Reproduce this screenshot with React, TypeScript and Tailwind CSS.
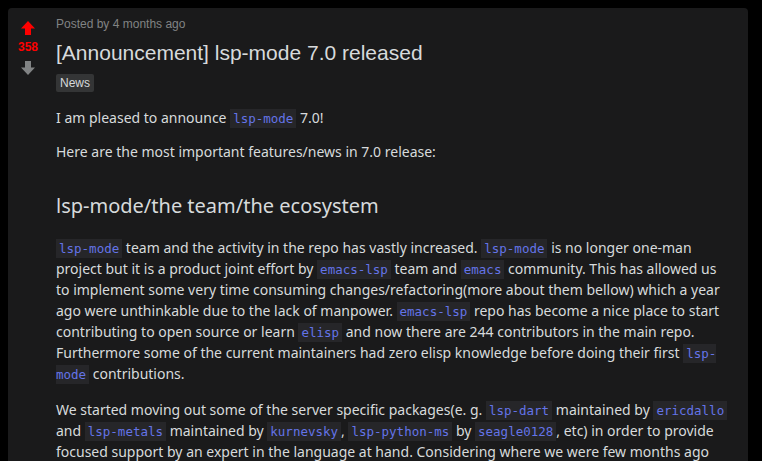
import React from 'react';

const Code = ({ children }: { children: React.ReactNode }) => (
  <code className="bg-[#262629] text-[#6474e8] px-[3px] py-[2px] text-[12.5px] leading-[15px] font-['DejaVu_Sans_Mono',monospace]">
    {children}
  </code>
);

const Arrow = ({ up, color }: { up: boolean; color: string }) => (
  <svg width="16" height="16" viewBox="0 0 16 16" className={up ? '' : 'rotate-180'}>
    <path d="M8 1 L15 8.5 L11 8.5 L11 15 L5 15 L5 8.5 L1 8.5 Z" fill={color} />
  </svg>
);

const App = () => {
  return (
    <div className="min-h-screen bg-black pt-2 pl-2 pr-[14px]">
      <div className="flex bg-[#1a1a1b] rounded-t min-h-[460px]">
        {/* Votes */}
        <div className="w-10 flex flex-col items-center pt-[12px] shrink-0">
          <Arrow up color="#ff0000" />
          <span className="text-[12px] font-bold text-[#ff0000] leading-[16px] mt-[3px] font-['Liberation_Sans',sans-serif]">
            358
          </span>
          <div className="mt-[5px]">
            <Arrow up={false} color="#818384" />
          </div>
        </div>

        {/* Post */}
        <div className="flex-1 pl-2 pr-[18px] pt-[8px] font-['Noto_Sans',sans-serif]">
          <div className="text-[12px] text-[#818384] leading-[16px] font-['Liberation_Sans',sans-serif]">
            Posted by 4 months ago
          </div>
          <h1 className="mt-[8px] text-[21px] leading-[26px] font-medium text-[#d7dadc] font-['Liberation_Sans',sans-serif]">
            [Announcement] lsp-mode 7.0 released
          </h1>
          <span className="inline-block mt-[8px] bg-[#343536] text-[#d7dadc] text-[12px] font-medium leading-[16px] px-[4px] py-[1px] rounded-[2px] font-['Liberation_Sans',sans-serif]">
            News
          </span>

          <div className="mt-[14px] text-[14px] leading-[21px] text-[#d7dadc]">
            <p>
              I am pleased to announce <Code>lsp-mode</Code> 7.0!
            </p>
            <p className="mt-[13px]">Here are the most important features/news in 7.0 release:</p>
            <h2 className="mt-[30px] text-[20px] leading-[28px] font-normal">lsp-mode/the team/the ecosystem</h2>
            <p className="mt-[17px]">
              {' '}<Code>lsp-mode</Code> team and the activity in the repo has vastly increased. <Code>lsp-mode</Code>{' '}
              is no longer one-man project but it is a product joint effort by <Code>emacs-lsp</Code> team and{' '}
              <Code>emacs</Code> community. This has allowed us to implement some very time consuming
              changes/refactoring(more about them bellow) which a year ago were unthinkable due to the lack of
              manpower. <Code>emacs-lsp</Code> repo has become a nice place to start contributing to open source or
              learn <Code>elisp</Code> and now there are 244 contributors in the main repo. Furthermore some of the
              current maintainers had zero elisp knowledge before doing their first <Code>lsp-mode</Code>{' '}
              contributions.
            </p>
            <p className="mt-[15px]">
              We started moving out some of the server specific packages(e. g. <Code>lsp-dart</Code> maintained by{' '}
              <Code>ericdallo</Code> and <Code>lsp-metals</Code> maintained by <Code>kurnevsky</Code>,{' '}
              <Code>lsp-python-ms</Code> by <Code>seagle0128</Code>, etc) in order to provide focused support by an
              expert in the language at hand. Considering where we were few months ago
            </p>
          </div>
        </div>
      </div>
    </div>
  );
};

export default App;
